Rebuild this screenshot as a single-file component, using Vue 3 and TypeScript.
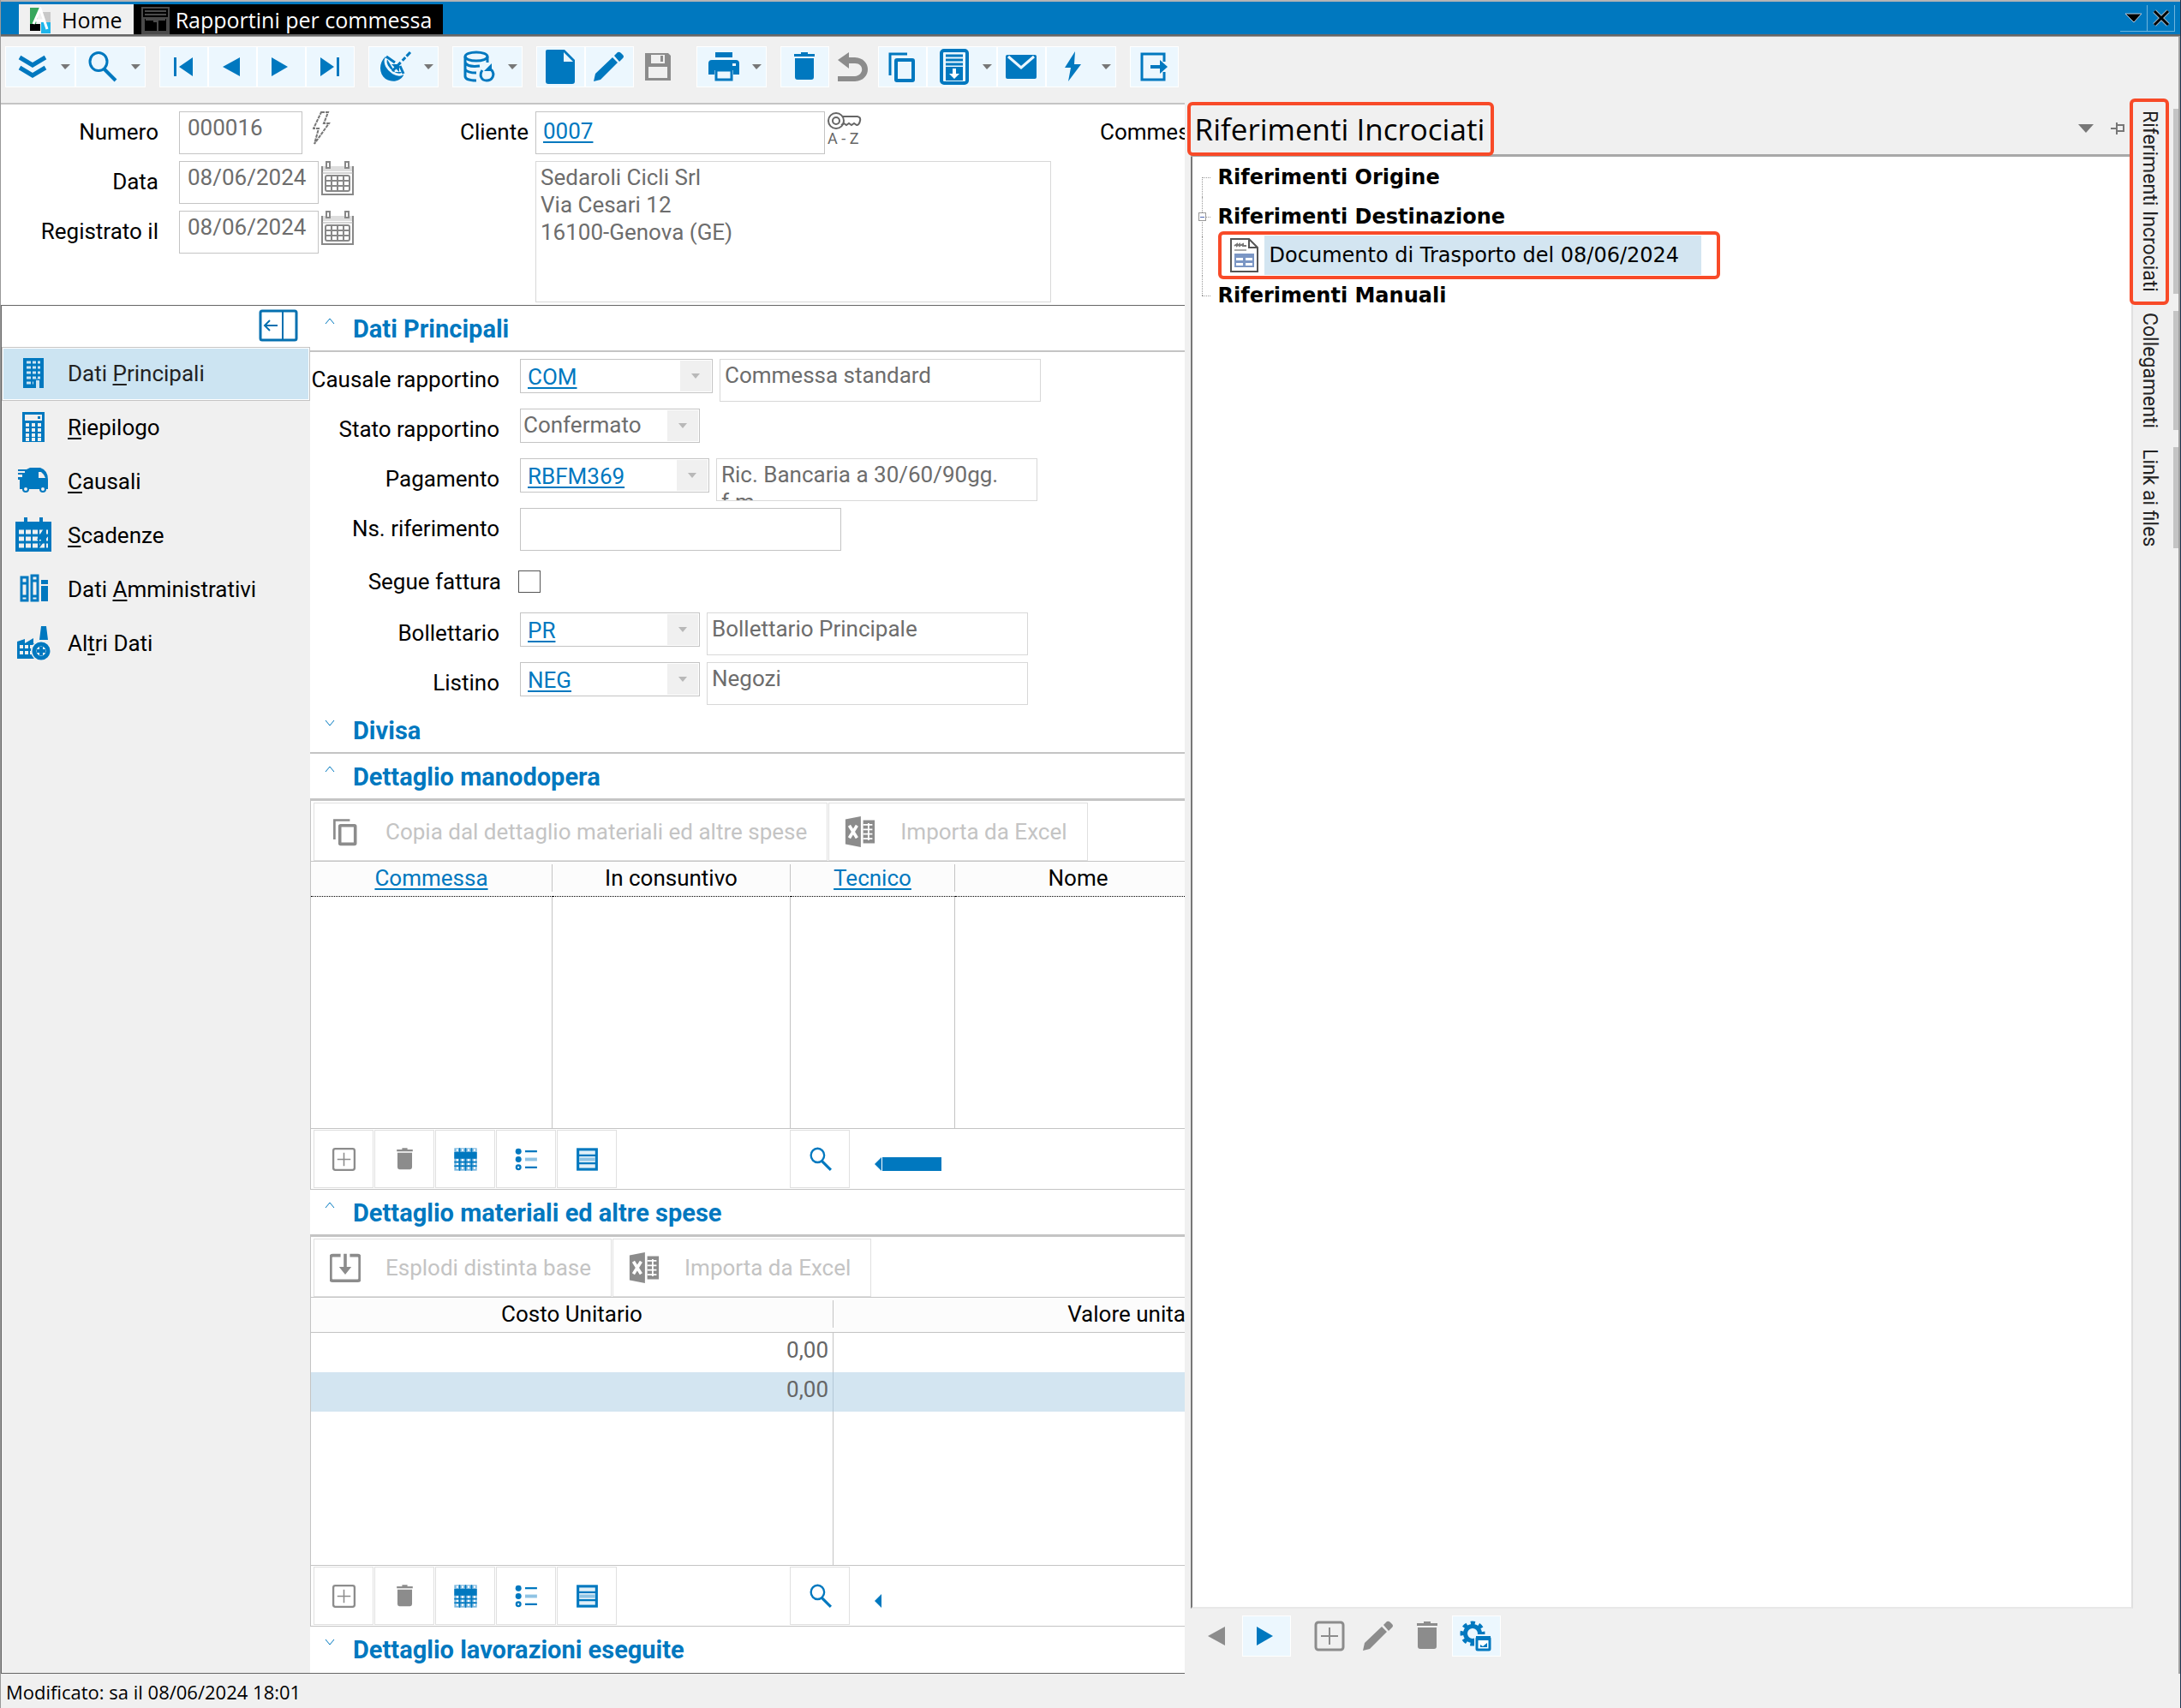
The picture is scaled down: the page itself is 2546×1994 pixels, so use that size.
<script setup lang="ts">
import { ref } from 'vue'

interface Tool {
  icon: string
  label: string
  menu?: boolean
  off?: boolean
}

const icons: Record<string, string> = {
  expand: '<path d="M6 9l15 9 15-9M6 21l15 9 15-9" fill="none" stroke="currentColor" stroke-width="5"/>',
  search: '<ellipse cx="16" cy="14" rx="10" ry="10.5" fill="none" stroke="currentColor" stroke-width="3"/><path d="M22 22l14 14" stroke="currentColor" stroke-width="4"/>',
  first: '<path d="M9 9h3v22H9zM31 9v22L15 20z" fill="currentColor"/>',
  prev: '<path d="M29 9v22L9 20z" fill="currentColor"/>',
  next: '<path d="M9 9v22l19-11z" fill="currentColor"/>',
  last: '<path d="M9 9v22l16-11zM28 9h3v22h-3z" fill="currentColor"/>',
  dish: '<path d="M9 8C1 15 1 28 9 34c8 5 17 3 21-4l-2-4-8 0z" fill="currentColor"/><path d="M10 10c-3 6 2 13 8 17 5 3 10 3 11 0" fill="none" stroke="#ecf7fe" stroke-width="3"/><path d="M10 8l10 7M30 28l-4-9" fill="none" stroke="currentColor" stroke-width="3"/><path d="M16 17h9v9z" fill="currentColor"/><path d="M17 25L38 3" stroke="currentColor" stroke-width="3" stroke-dasharray="14 3 5 2"/>',
  database: '<g fill="none" stroke="currentColor" stroke-width="3"><ellipse cx="17" cy="8" rx="13" ry="5"/><path d="M4 8v23c0 3 5 5 13 5M30 8v7M4 15c2 4 9 5 17 4M4 23c2 3 7 4 13 4M4 30"/><path d="M24 24c-4 6-1 12 5 12 7 0 10-7 6-12l-4-3"/></g><path d="M35 16v9h-9z" fill="currentColor"/>',
  file: '<path d="M5 0h20l12 12v25a3 3 0 0 1-3 3H6a3 3 0 0 1-3-3V2a2 2 0 0 1 2-2z" fill="currentColor"/><path d="M24 3v11h11z" fill="#ecf7fe"/>',
  pencil: '<path d="M2 37l2-9L24 9l6 6L10 35zM26 7l4-4q2-1 4 1l2 2q2 2 0 4l-4 4z" fill="currentColor"/>',
  save: '<path d="M7 4h25l3 3v29H5V4z" fill="currentColor"/><path d="M12 6h16v10H12zM9 20h22v13H9z" fill="#f0f0f0"/><path d="M23 7h3v7h-3z" fill="currentColor"/>',
  print: '<path d="M11 3h20v6H11zM7 12h28q4 0 4 4v13h-7v-5H10v5H3V16q0-4 4-4z" fill="currentColor"/><path d="M12 24h18v11H12z" fill="#ecf7fe" stroke="currentColor" stroke-width="3"/><path d="M31 16h4v3h-4z" fill="#ecf7fe"/>',
  trash: '<path d="M8 5h8V3h8v2h8v3H8zM9 10h22v22q0 3-3 3H12q-3 0-3-3z" fill="currentColor"/>',
  undo: '<path d="M2 12l13-9v6h7c20 1 20 27 0 28H2v-6h20c11-1 11-15 0-15h-7v6z" fill="currentColor"/>',
  copy: '<path d="M26 5H6v25" fill="none" stroke="currentColor" stroke-width="3"/><rect x="13" y="12" width="20" height="24" rx="1" fill="none" stroke="currentColor" stroke-width="4"/>',
  archive: '<rect x="6" y="1" width="30" height="38" rx="3" fill="none" stroke="currentColor" stroke-width="4"/><path d="M11 7h20M11 12h20M11 17h20" stroke="currentColor" stroke-width="3"/><path d="M11 20h20v16H11z" fill="currentColor"/><path d="M19 22h4v6h4l-6 6-6-6h4z" fill="#fff"/>',
  mail: '<rect x="2" y="6" width="36" height="28" rx="2" fill="currentColor"/><path d="M5 8l15 13L35 8" fill="none" stroke="#ecf7fe" stroke-width="3"/>',
  bolt: '<path d="M23 2L11 21h7l-3 16 15-20h-8z" fill="currentColor"/>',
  exit: '<path d="M32 14V5H6v30h26v-9" fill="none" stroke="currentColor" stroke-width="3"/><path d="M16 18h11v-6l9 8-9 8v-6H16z" fill="currentColor"/>',
  building: '<path d="M10 4h24v35h-5V30h-4v9H10z" fill="currentColor"/><path d="M14 9h16M14 15h16M14 21h16M14 27h16M14 33h8" stroke="#cce4f2" stroke-width="3"/><path d="M20 6v32M26 6v22" stroke="currentColor" stroke-width="2"/>',
  calculator: '<path d="M9 4h26v35H9z" fill="currentColor"/><path d="M12 7h20v7H12z" fill="#f0f0f0"/><path d="M27 9h3v3h-3z" fill="currentColor"/><path d="M13 19h19M13 25h19M13 31h19M13 36h19" stroke="#f0f0f0" stroke-width="4" stroke-dasharray="4 3"/>',
  truck: '<path d="M4 8h10l4-2h12q9 3 9 14v11H6V20H4v-3h5v-3H4v-2h8V10H4z" fill="currentColor"/><path d="M28 11h3q4 3 5 7h-8z" fill="#f0f0f0"/><circle cx="13" cy="31" r="4" fill="currentColor"/><circle cx="33" cy="31" r="4" fill="currentColor"/><circle cx="13" cy="31" r="2" fill="#f0f0f0"/><circle cx="33" cy="31" r="2" fill="#f0f0f0"/>',
  calendar: '<path d="M1 6h10V1h4v5h14V1h4v5h10v35H1z" fill="currentColor"/><path d="M5 18h34M5 26h34M5 34h34" stroke="#f0f0f0" stroke-width="5" stroke-dasharray="6 2"/><path d="M34 14L26 27h5l-3 11 11-15h-5l3-9z" fill="currentColor"/>',
  binders: '<g fill="none" stroke="currentColor" stroke-width="3"><path d="M8 8h7v27H8zM20 6h7v29h-7z"/><path d="M8 15h7M8 30h7M20 12h7M20 30h7"/></g><path d="M31 11h8v5h-8zM31 18h8v18h-8z" fill="currentColor"/>',
  factory: '<path d="M31 2h6l2 16H29z" fill="currentColor"/><path d="M3 40V20l9-3v5l10-6v6h3v18z" fill="currentColor"/><path d="M6 26h16M6 33h16" stroke="#f0f0f0" stroke-width="4" stroke-dasharray="4 2"/><circle cx="31" cy="31" r="12" fill="#f0f0f0"/><circle cx="31" cy="31" r="8" fill="none" stroke="currentColor" stroke-width="5"/><path d="M31 26v10M26 31h10" stroke="currentColor" stroke-width="4"/>',
  add: '<rect x="4" y="4" width="32" height="32" rx="3" fill="none" stroke="currentColor" stroke-width="3"/><path d="M20 10v20M10 20h20" stroke="currentColor" stroke-width="2"/>',
  grid: '<path d="M3 3h34v34H3z" fill="#7ab7de"/><path d="M3 9h34v10H3z" fill="currentColor"/><path d="M3 24h34M3 30h34M11 3v34M20 3v34M29 3v34" stroke="currentColor" stroke-width="2"/><path d="M6 6h3M14 6h3M23 6h3M32 6h3M6 21h3M14 21h3M23 21h3M32 21h3M6 27h3M14 27h3M23 27h3M32 27h3M6 33h3M14 33h3M23 33h3M32 33h3" stroke="#fff" stroke-width="3"/>',
  list: '<circle cx="8" cy="8" r="4.500" fill="currentColor"/><circle cx="8" cy="20" r="4.500" fill="currentColor"/><circle cx="8" cy="32" r="3" fill="none" stroke="currentColor" stroke-width="3"/><path d="M18 8h18M18 32h18" stroke="currentColor" stroke-width="3"/><path d="M18 20h18" stroke="#8fc3e4" stroke-width="5"/>',
  rows: '<rect x="6" y="5" width="28" height="30" fill="#e3f0f8" stroke="currentColor" stroke-width="4"/><path d="M6 14h28M6 26h28" stroke="currentColor" stroke-width="3"/><path d="M8 20h24" stroke="#8fc3e4" stroke-width="5"/>',
  excel: '<path d="M1 4l20-4v40L1 36z" fill="currentColor"/><path d="M24 5h15v30H24z" fill="currentColor"/><path d="M24 11h12M24 17h12M24 23h12M24 29h12M31 9v22" stroke="#fff" stroke-width="2"/><path d="M6 12l10 16M16 12L6 28" stroke="#fff" stroke-width="4"/>',
  explode: '<path d="M14 4H4q-3 0-3 3v27q0 3 3 3h32q3 0 3-3V7q0-3-3-3H26" fill="none" stroke="currentColor" stroke-width="4"/><path d="M18 2h4v17h6l-8 10-8-10h6z" fill="currentColor"/>',
  date: '<path d="M2 6v33h36V6" fill="none" stroke="#888" stroke-width="2"/><path d="M3 6h34v6H3z" fill="#ddd"/><path d="M2 14h36" stroke="#aaa" stroke-width="1"/><g fill="#fff" stroke="#888" stroke-width="2"><rect x="7" y="1" width="4" height="7"/><rect x="29" y="1" width="4" height="7"/><rect x="6" y="17" width="28" height="18" rx="2"/></g><path d="M7 23h26M7 29h26M13 17v18M20 17v18M27 17v18" stroke="#888" stroke-width="2"/>',
  gear: '<g fill="none" stroke="currentColor"><circle cx="16" cy="17" r="8.500" stroke-width="5"/><circle cx="16" cy="17" r="12" stroke-width="5" stroke-dasharray="5 4.420" stroke-dashoffset="2.500"/></g><path d="M18 18h21v21H18z" fill="#ecf7fe"/><rect x="21" y="22" width="15" height="14" rx="1" fill="#fff" stroke="currentColor" stroke-width="3"/><path d="M20 20h17v5H20zM25 30l3 2 5-4v5h-8z" fill="currentColor"/>',
}

const toolGroups: Tool[][] = [
  [{ icon: 'expand', label: 'Espandi', menu: true }, { icon: 'search', label: 'Cerca', menu: true }],
  [{ icon: 'first', label: 'Primo' }, { icon: 'prev', label: 'Precedente' }, { icon: 'next', label: 'Successivo' }, { icon: 'last', label: 'Ultimo' }],
  [{ icon: 'dish', label: 'Collega', menu: true }],
  [{ icon: 'database', label: 'Dati', menu: true }],
  [{ icon: 'file', label: 'Nuovo' }, { icon: 'pencil', label: 'Modifica' }, { icon: 'save', label: 'Salva', off: true }],
  [{ icon: 'print', label: 'Stampa', menu: true }],
  [{ icon: 'trash', label: 'Elimina' }, { icon: 'undo', label: 'Annulla', off: true }, { icon: 'copy', label: 'Copia' }, { icon: 'archive', label: 'Archivia', menu: true }, { icon: 'mail', label: 'Invia' }, { icon: 'bolt', label: 'Azioni', menu: true }],
  [{ icon: 'exit', label: 'Esci' }],
]

const pages = [
  { icon: 'building', parts: ['Dati ', 'P', 'rincipali'] },
  { icon: 'calculator', parts: ['', 'R', 'iepilogo'] },
  { icon: 'truck', parts: ['', 'C', 'ausali'] },
  { icon: 'calendar', parts: ['', 'S', 'cadenze'] },
  { icon: 'binders', parts: ['Dati ', 'A', 'mministrativi'] },
  { icon: 'factory', parts: ['Al', 't', 'ri Dati'] },
]
const page = ref(0)

const gridTools: Tool[] = [
  { icon: 'add', label: 'Aggiungi', off: true },
  { icon: 'trash', label: 'Elimina', off: true },
  { icon: 'grid', label: 'Griglia' },
  { icon: 'list', label: 'Elenco' },
  { icon: 'rows', label: 'Righe' },
]

const refTools: Tool[] = [
  { icon: 'prev', label: 'Precedente', off: true },
  { icon: 'next', label: 'Successivo' },
  { icon: 'add', label: 'Aggiungi', off: true },
  { icon: 'pencil', label: 'Modifica', off: true },
  { icon: 'trash', label: 'Elimina', off: true },
  { icon: 'gear', label: 'Impostazioni' },
]

const sideTabs = ['Riferimenti Incrociati', 'Collegamenti', 'Link ai files']

const numero = ref('000016')
const data = ref('08/06/2024')
const registrato = ref('08/06/2024')
const cliente = ref('0007')
const indirizzo = ref('Sedaroli Cicli Srl\nVia Cesari 12\n16100-Genova (GE)')
const causale = ref('COM')
const stato = ref('Confermato')
const pagamento = ref('RBFM369')
const riferimento = ref('')
const segue = ref(false)
const bollettario = ref('PR')
const listino = ref('NEG')
</script>

<template>
  <div class="window">
    <header class="titlebar">
      <nav class="doc-tabs">
        <button class="doc-tab">
          <svg width="25" height="32" viewBox="0 0 25 32"><path d="M0 1h11L7 20H0z" fill="#37a75c" /><path d="M13 6h11v16h-7z" fill="#c8c8c8" /><path d="M0 20h12v8H0z" fill="#000" /><path d="M13 18h11v13H13z" fill="#1fb5ea" /><path d="M4 20L12 2l8 24M7 16h10" fill="none" stroke="#fff" stroke-width="3" /></svg>
          <span>Home</span>
        </button>
        <button class="doc-tab current">
          <svg width="33" height="32" viewBox="0 0 33 32" fill="none" stroke="#4a4a4a" stroke-width="2"><rect x="1" y="1" width="31" height="30" /><path d="M4 5h25M4 9h25M3 13h27v16H3zM14 17h5v11M5 15h23" /></svg>
          <span>Rapportini per commessa</span>
        </button>
      </nav>
      <div class="window-controls">
        <button aria-label="Elenco schede"><svg width="20" height="12" viewBox="0 0 20 12"><path d="M0 1h19L10 11z" fill="#000" stroke="#bcd" stroke-width="1" /></svg></button>
        <button aria-label="Chiudi"><svg width="20" height="20" viewBox="0 0 20 20"><path d="M2 2l16 16M18 2L2 18" stroke="#9cb4c4" stroke-width="5" /><path d="M2 2l16 16M18 2L2 18" stroke="#000" stroke-width="3" /></svg></button>
      </div>
    </header>

    <div class="toolbar">
      <div v-for="(group, g) in toolGroups" :key="g" class="tool-group">
        <button v-for="tool in group" :key="tool.icon" class="tool" :class="{ menu: tool.menu, off: tool.off }" :aria-label="tool.label">
          <svg width="40" height="40" viewBox="0 0 40 40" overflow="visible" v-html="icons[tool.icon]"></svg>
          <svg v-if="tool.menu" class="caret" width="11" height="6" viewBox="0 0 11 6"><path d="M0 0h11L5 6z" /></svg>
        </button>
      </div>
    </div>

    <div class="workspace">
      <main class="document">
        <section class="head-form">
          <div class="head-left">
            <div class="head-row">
              <label for="numero">Numero</label>
              <input id="numero" v-model="numero" class="box short">
              <svg width="40" height="40" viewBox="0 0 40 40"><path d="M10 1h8l-5 13h6L2 38l5-18H1z" fill="none" stroke="#777" stroke-width="2" stroke-dasharray="4 1" /></svg>
            </div>
            <div class="head-row">
              <label for="data">Data</label>
              <input id="data" v-model="data" class="box date">
              <svg width="40" height="40" viewBox="0 0 40 40" v-html="icons.date"></svg>
            </div>
            <div class="head-row">
              <label for="registrato">Registrato il</label>
              <input id="registrato" v-model="registrato" class="box date">
              <svg width="40" height="40" viewBox="0 0 40 40" v-html="icons.date"></svg>
            </div>
          </div>
          <div class="head-right">
            <div class="client-row">
              <label for="cliente" class="client-label">Cliente</label>
              <input id="cliente" v-model="cliente" class="box client link">
              <div class="key">
                <svg width="40" height="21" viewBox="0 0 40 21" fill="none" stroke="#666" stroke-width="2"><circle cx="10" cy="10" r="9" /><circle cx="10" cy="10" r="4" /><path d="M17 5h18q4 1 3 5-1 5-4 5l-3-2-3 2-3-2-3 2-3-2-3 2" /></svg>
                <span>A - Z</span>
              </div>
              <span class="job-label">Commessa</span>
            </div>
            <textarea v-model="indirizzo" class="note address" aria-label="Indirizzo"></textarea>
          </div>
        </section>

        <div class="body">
          <aside class="pages">
            <div class="pages-top">
              <button class="collapse" aria-label="Riduci">
                <svg width="46" height="38" viewBox="0 0 46 38" fill="none" stroke="#0570b0" stroke-width="3"><rect x="2" y="2" width="42" height="34" rx="2" /><path d="M28 2v34M7 19h15M13 13l-6 6 6 6" stroke-width="2" /></svg>
              </button>
            </div>
            <button v-for="(p, i) in pages" :key="p.icon" class="page" :class="{ selected: page === i }" @click="page = i">
              <svg width="44" height="44" viewBox="0 0 44 44" v-html="icons[p.icon]"></svg>
              <span>{{ p.parts[0] }}<u>{{ p.parts[1] }}</u>{{ p.parts[2] }}</span>
            </button>
          </aside>

          <div class="details">
            <h2 class="section"><svg class="chev" width="12" height="8" viewBox="0 0 12 8"><path d="M1 7l5-6 5 6" /></svg>Dati Principali</h2>
            <div class="form">
              <div class="row">
                <label for="causale">Causale rapportino</label>
                <div class="combo w-a"><input id="causale" v-model="causale" class="link"><button aria-label="Apri"><svg width="10" height="6" viewBox="0 0 10 6"><path d="M0 0h10L5 6z" /></svg></button></div>
                <textarea class="note" aria-label="Descrizione causale">Commessa standard</textarea>
              </div>
              <div class="row">
                <label for="stato">Stato rapportino</label>
                <div class="combo w-c"><select id="stato" v-model="stato"><option>Confermato</option></select><span class="drop"><svg width="10" height="6" viewBox="0 0 10 6"><path d="M0 0h10L5 6z" /></svg></span></div>
              </div>
              <div class="row">
                <label for="pagamento">Pagamento</label>
                <div class="combo w-b"><input id="pagamento" v-model="pagamento" class="link"><button aria-label="Apri"><svg width="10" height="6" viewBox="0 0 10 6"><path d="M0 0h10L5 6z" /></svg></button></div>
                <textarea class="note" aria-label="Descrizione pagamento">Ric. Bancaria a 30/60/90gg. f.m.</textarea>
              </div>
              <div class="row">
                <label for="riferimento">Ns. riferimento</label>
                <input id="riferimento" v-model="riferimento" class="box wide">
              </div>
              <div class="row check-row">
                <label for="segue">Segue fattura</label>
                <input id="segue" v-model="segue" type="checkbox" class="check">
              </div>
              <div class="row">
                <label for="bollettario">Bollettario</label>
                <div class="combo w-c"><input id="bollettario" v-model="bollettario" class="link"><button aria-label="Apri"><svg width="10" height="6" viewBox="0 0 10 6"><path d="M0 0h10L5 6z" /></svg></button></div>
                <textarea class="note" aria-label="Descrizione bollettario">Bollettario Principale</textarea>
              </div>
              <div class="row">
                <label for="listino">Listino</label>
                <div class="combo w-c"><input id="listino" v-model="listino" class="link"><button aria-label="Apri"><svg width="10" height="6" viewBox="0 0 10 6"><path d="M0 0h10L5 6z" /></svg></button></div>
                <textarea class="note" aria-label="Descrizione listino">Negozi</textarea>
              </div>
            </div>

            <h2 class="section"><svg class="chev" width="12" height="8" viewBox="0 0 12 8"><path d="M1 1l5 6 5-6" /></svg>Divisa</h2>
            <h2 class="section"><svg class="chev" width="12" height="8" viewBox="0 0 12 8"><path d="M1 7l5-6 5 6" /></svg>Dettaglio manodopera</h2>

            <div class="panel">
              <div class="panel-bar">
                <button class="command" disabled><svg width="36" height="36" viewBox="0 0 40 40" v-html="icons.copy"></svg>Copia dal dettaglio materiali ed altre spese</button>
                <button class="command" disabled><svg width="36" height="36" viewBox="0 0 40 40" v-html="icons.excel"></svg>Importa da Excel</button>
              </div>
              <div class="clip">
                <table class="labour">
                  <colgroup><col class="c1"><col class="c2"><col class="c3"><col class="c4"></colgroup>
                  <thead class="dotted"><tr><th><a href="#">Commessa</a></th><th><span>In consuntivo</span></th><th><a href="#">Tecnico</a></th><th><span>Nome</span></th></tr></thead>
                  <tbody><tr><td></td><td></td><td></td><td></td></tr></tbody>
                </table>
              </div>
              <div class="panel-foot">
                <button v-for="t in gridTools" :key="t.icon" class="mini" :class="{ off: t.off }" :aria-label="t.label"><svg width="31" height="31" viewBox="0 0 40 40" v-html="icons[t.icon]"></svg></button>
                <button class="mini find" aria-label="Cerca"><svg width="31" height="31" viewBox="0 0 40 40" v-html="icons.search"></svg></button>
                <div class="scroll"><svg width="8" height="16" viewBox="0 0 8 16"><path d="M8 0v16L0 8z" fill="currentColor" /></svg><i></i></div>
              </div>
            </div>

            <h2 class="section"><svg class="chev" width="12" height="8" viewBox="0 0 12 8"><path d="M1 7l5-6 5 6" /></svg>Dettaglio materiali ed altre spese</h2>
            <div class="panel">
              <div class="panel-bar">
                <button class="command" disabled><svg width="36" height="36" viewBox="0 0 40 40" v-html="icons.explode"></svg>Esplodi distinta base</button>
                <button class="command" disabled><svg width="36" height="36" viewBox="0 0 40 40" v-html="icons.excel"></svg>Importa da Excel</button>
              </div>
              <div class="clip">
                <table class="costs">
                  <colgroup><col class="k1"><col class="k2"></colgroup>
                  <thead><tr><th><span>Costo Unitario</span></th><th><span>Valore unitario</span></th></tr></thead>
                  <tbody>
                    <tr><td>0,00</td><td></td></tr>
                    <tr class="picked"><td>0,00</td><td></td></tr>
                    <tr class="filler"><td></td><td></td></tr>
                  </tbody>
                </table>
              </div>
              <div class="panel-foot">
                <button v-for="t in gridTools" :key="t.icon" class="mini" :class="{ off: t.off }" :aria-label="t.label"><svg width="31" height="31" viewBox="0 0 40 40" v-html="icons[t.icon]"></svg></button>
                <button class="mini find" aria-label="Cerca"><svg width="31" height="31" viewBox="0 0 40 40" v-html="icons.search"></svg></button>
                <div class="scroll"><svg width="8" height="16" viewBox="0 0 8 16"><path d="M8 0v16L0 8z" fill="currentColor" /></svg></div>
              </div>
            </div>
            <h2 class="section final"><svg class="chev" width="12" height="8" viewBox="0 0 12 8"><path d="M1 1l5 6 5-6" /></svg>Dettaglio lavorazioni eseguite</h2>
          </div>
        </div>
      </main>

      <aside class="references">
        <header class="ref-head">
          <h2>Riferimenti Incrociati</h2>
          <div class="ref-controls">
            <button aria-label="Menu"><svg width="18" height="10" viewBox="0 0 18 10"><path d="M0 0h18L9 10z" fill="#777" /></svg></button>
            <button aria-label="Blocca"><svg width="16" height="14" viewBox="0 0 16 14" fill="none" stroke="#777" stroke-width="2"><path d="M0 7h6M7 0v14M7 3h8v7H7" /></svg></button>
          </div>
        </header>
        <div class="tree">
          <ul>
            <li class="node"><i class="stub start"></i><b>Riferimenti Origine</b></li>
            <li class="node"><i class="stub"><em></em></i><b>Riferimenti Destinazione</b></li>
            <li class="node leaf">
              <i class="stub through"></i>
              <div class="marked">
                <svg width="33" height="40" viewBox="0 0 33 40"><path d="M1 1h21l10 10v28H1z" fill="#fff" stroke="#555" stroke-width="2" /><path d="M22 1v10h10" fill="none" stroke="#555" stroke-width="2" /><path d="M5 9l3-2v2l3-2v2l4-2v2h4" fill="none" stroke="#777" stroke-width="2" /><path d="M5 14h14" stroke="#aaa" stroke-width="2" /><path d="M5 18h23v16H5z" fill="#7b96c4" /><path d="M7 23h8v3H7zM18 23h8v3h-8zM7 29h8v3H7zM18 29h8v3h-8z" fill="#fff" /></svg>
                <a href="#">Documento di Trasporto del 08/06/2024</a>
              </div>
            </li>
            <li class="node"><i class="stub end"></i><b>Riferimenti Manuali</b></li>
          </ul>
        </div>
        <footer class="ref-foot">
          <button v-for="t in refTools" :key="t.icon" class="tool" :class="[t.icon, { off: t.off }]" :aria-label="t.label"><svg width="40" height="40" viewBox="0 0 40 40" v-html="icons[t.icon]"></svg></button>
        </footer>
      </aside>

      <nav class="side-tabs">
        <button v-for="(tab, i) in sideTabs" :key="tab" :class="{ outlined: i === 0 }">{{ tab }}</button>
      </nav>
    </div>

    <footer class="status">Modificato: sa il 08/06/2024 18:01</footer>
  </div>
</template>

<style>
body {
  margin: 0;
  background: #f0f0f0;
}
</style>

<style scoped>
* {
  box-sizing: border-box;
}
.window {
  display: flex;
  flex-direction: column;
  min-height: 100vh;
  background: #f0f0f0;
  border-left: 1px solid #999;
  border-right: 1px solid #1f3550;
  border-bottom: 1px solid #999;
  font: 26px/32px Roboto, sans-serif;
  color: #000;
}
button {
  font: inherit;
  color: inherit;
  background: none;
  border: 0;
  padding: 0;
}
svg {
  flex: none;
  display: block;
}
h2 {
  margin: 0;
}
input,
textarea,
select {
  font: inherit;
  color: #6d6d6d;
  margin: 0;
  border-radius: 0;
}

.titlebar {
  display: flex;
  justify-content: space-between;
  height: 42px;
  border-top: 2px solid #b4b4b4;
  border-bottom: 2px solid #666;
  background: #0078bf;
}
.doc-tabs {
  display: flex;
  padding: 3px 0 0 21px;
}
.doc-tab {
  display: flex;
  align-items: center;
  gap: 12px;
  padding: 2px 13px 0;
  background: #f0f0f0;
  font: 25px/33px "Open Sans", sans-serif;
}
.doc-tab.current {
  background: #000;
  color: #fff;
  gap: 7px;
  padding: 2px 13px 0 9px;
}
.window-controls {
  display: flex;
  padding: 4px 6px 3px 0;
}
.window-controls button {
  display: flex;
  align-items: center;
  justify-content: center;
  width: 32px;
  border-right: 1px solid #6fb4dc;
  border-bottom: 1px solid #6fb4dc;
}

.toolbar {
  display: flex;
  gap: 16px;
  height: 78px;
  padding: 11px 4px 0 5px;
  border-top: 1px solid #999;
  border-right: 2px solid #a0a0a0;
}
.tool-group {
  display: flex;
}
.tool {
  display: flex;
  align-items: center;
  width: 57px;
  height: 48px;
  padding: 0 7px;
  border: 1px solid #fff;
  background: #ecf7fe;
  color: #0078bf;
}
.tool.menu {
  justify-content: space-between;
  width: 82px;
  padding: 0 5px 0 10px;
}
.tool.off {
  background: none;
  border-color: transparent;
  color: #8c8c8c;
}
.caret {
  fill: #777;
}

.workspace {
  display: flex;
  flex: 1;
  border-right: 2px solid #a0a0a0;
}
.document {
  display: flex;
  flex-direction: column;
  flex: 1381 1 0;
  min-width: 0;
  overflow: hidden;
  border-top: 2px solid #c4c4c4;
  border-bottom: 1px solid #666;
  background: #fff;
}
.head-form {
  display: flex;
  height: 235px;
  padding-top: 8px;
  border-bottom: 1px solid #666;
}
.head-left {
  display: flex;
  flex-direction: column;
  flex: none;
  gap: 8px;
  width: 416px;
}
.head-row {
  display: flex;
  align-items: flex-start;
  gap: 2px;
}
.head-row label {
  width: 184px;
  margin-right: 22px;
  line-height: 48px;
  text-align: right;
}
.box {
  height: 50px;
  padding: 2px 9px 14px;
  border: 1px solid #c4c4c4;
  background: #fff;
}
.box.short {
  width: 144px;
  margin-right: 10px;
}
.box.date {
  width: 163px;
}
.box.wide {
  width: 375px;
}
.box.client {
  flex: none;
  width: 338px;
  padding: 4px 8px 8px;
}
.link {
  color: #0078bf;
  text-decoration: underline;
  text-underline-offset: 3px;
}
.head-right {
  flex: 1;
  min-width: 0;
}
.client-row {
  display: flex;
  height: 50px;
  margin-bottom: 8px;
  line-height: 48px;
  white-space: nowrap;
}
.client-label {
  flex: none;
  width: 200px;
  margin-right: 8px;
  text-align: right;
}
.key {
  flex: none;
  margin: 1px 278px 0 3px;
  color: #666;
  font-size: 18px;
  line-height: 20px;
}
.job-label {
  min-width: 0;
  overflow: hidden;
}
.note {
  display: block;
  width: 375px;
  height: 50px;
  padding: 2px 5px 0;
  overflow: hidden;
  resize: none;
  border: 1px solid #d8d8d8;
  background: #fff;
}
.note.address {
  width: 602px;
  height: 165px;
  margin-left: 208px;
  padding: 2px 5px;
}

.body {
  display: flex;
  flex: 1;
  border-left: 1px solid #666;
}
.pages {
  flex: none;
  width: 360px;
  background: #f0f0f0;
}
.pages-top {
  display: flex;
  justify-content: flex-end;
  height: 48px;
  padding: 4px 14px 0 0;
  background: #fff;
}
.collapse {
  height: 38px;
}
.page {
  display: flex;
  align-items: center;
  gap: 18px;
  width: 100%;
  height: 63px;
  padding: 0 0 1px 14px;
  border: 1px solid transparent;
  color: #000;
}
.page svg {
  color: #0078bf;
}
.page.selected {
  background: #cce4f2;
  border-color: #c4c4c4;
  box-shadow: inset 0 0 0 1px #fff;
  color: #222;
}
.page u {
  text-underline-offset: 3px;
}

.details {
  flex: 1;
  min-width: 0;
  background: #fff;
}
.section {
  display: flex;
  align-items: flex-start;
  gap: 21px;
  height: 54px;
  padding: 11px 0 0 17px;
  border-bottom: 2px solid #c4c4c4;
  color: #0078bf;
  font-size: 29px;
  font-weight: 700;
  line-height: 32px;
}
.section.final {
  border: 0;
}
.chev {
  margin-top: 3px;
  fill: none;
  stroke: #0078bf;
  stroke-width: 1;
}
.form {
  display: flex;
  flex-direction: column;
  gap: 8px;
  height: 415px;
  padding-top: 8px;
}
.row {
  display: flex;
  align-items: flex-start;
  height: 50px;
}
.row label {
  flex: none;
  width: 221px;
  margin-right: 24px;
  line-height: 48px;
  text-align: right;
  white-space: nowrap;
}
.check-row {
  height: 56px;
  align-items: center;
}
.check-row label {
  width: 223px;
  margin-right: 20px;
}
.check {
  appearance: none;
  width: 26px;
  height: 26px;
  border: 1px solid #555;
  background: #fff;
}
.combo {
  display: flex;
  height: 40px;
  margin-right: 8px;
  padding: 1px;
  border: 1px solid #c4c4c4;
}
.w-a {
  width: 225px;
}
.w-b {
  width: 221px;
}
.w-c {
  width: 210px;
}
.combo input,
.combo select {
  flex: 1;
  min-width: 0;
  padding: 2px 0 0 7px;
  border: 0;
  background: #fff;
}
.combo select {
  appearance: none;
  padding: 0 0 3px 2px;
}
.combo button,
.drop {
  display: flex;
  flex: none;
  align-items: center;
  justify-content: center;
  width: 36px;
  background: #f0f0f0;
  fill: #b8b8b8;
}

.panel {
  border: 1px solid #c4c4c4;
  border-right: 0;
}
.panel-bar {
  display: flex;
  gap: 1px;
  height: 70px;
  padding: 2px 3px 0;
}
.command {
  display: flex;
  align-items: center;
  height: 68px;
  gap: 29px;
  padding: 0 23px 0 18px;
  border: 1px solid #e0e0e0;
  color: #c4c4c4;
  white-space: nowrap;
}
.command svg {
  color: #8c8c8c;
}
.clip {
  overflow: hidden;
}
table {
  table-layout: fixed;
  border-collapse: separate;
  border-spacing: 0;
}
.labour {
  width: 1040px;
}
.costs {
  width: 1325px;
}
.c1 {
  width: 282px;
}
.c2 {
  width: 278px;
}
.c3 {
  width: 192px;
}
.c4 {
  width: 288px;
}
.k1 {
  width: 610px;
}
.k2 {
  width: 715px;
}
th {
  height: 42px;
  padding: 3px 0 5px;
  border-top: 1px solid #c4c4c4;
  border-bottom: 1px solid #c4c4c4;
  background: #fcfcfc;
  font-weight: 400;
  line-height: 32px;
}
.dotted th {
  border-bottom: 1px dotted #000;
}
th a,
th span {
  display: block;
  border-right: 1px solid #c4c4c4;
}
th a {
  color: #0078bf;
  text-underline-offset: 3px;
}
td {
  height: 46px;
  padding: 0 5px 6px;
  border-right: 1px solid #c4c4c4;
  color: #666;
  text-align: right;
}
.labour td {
  height: 270px;
}
.picked td {
  background: #d3e5f1;
  border-color: #b4c8d6;
}
.filler td {
  height: 179px;
}
.panel-foot {
  display: flex;
  align-items: center;
  height: 71px;
  padding-left: 3px;
  border-top: 1px solid #c4c4c4;
}
.mini {
  display: flex;
  align-items: center;
  justify-content: center;
  width: 70px;
  height: 68px;
  margin-right: 1px;
  border: 1px solid #e0e0e0;
  color: #0078bf;
}
.mini.off {
  color: #8c8c8c;
}
.mini.find {
  margin-left: 201px;
}
.scroll {
  display: flex;
  gap: 1px;
  margin: 11px 0 0 28px;
  color: #0078bf;
}
.scroll i {
  width: 69px;
  height: 16px;
  background: #0078bf;
}

.references {
  display: flex;
  flex-direction: column;
  flex: 1107 1 0;
  min-width: 0;
}
.ref-head {
  display: flex;
  justify-content: space-between;
  height: 63px;
  margin-left: 7px;
  border-bottom: 3px solid #a8a8a8;
}
.ref-head h2 {
  z-index: 1;
  height: 63px;
  margin: -1px 0 0 -4px;
  padding: 0 7px 0 5px;
  border: 4px solid #f84a28;
  border-radius: 6px;
  font: 35px/56px "Open Sans", sans-serif;
}
.ref-controls {
  display: flex;
  align-items: center;
  gap: 20px;
  padding-right: 10px;
}
.tree {
  flex: 1;
  margin-left: 7px;
  padding-top: 1px;
  border: solid #777;
  border-width: 0 2px 2px;
  border-right-color: #e0e0e0;
  border-bottom-color: #e8e8e8;
  background: #fff;
}
.tree ul {
  margin: 0;
  padding: 0 0 0 11px;
  list-style: none;
  font: 24px/46px "DejaVu Sans", sans-serif;
}
.node {
  display: flex;
  height: 46px;
}
.node b {
  white-space: nowrap;
}
.stub {
  position: relative;
  flex: none;
  width: 19px;
}
.stub::before {
  position: absolute;
  inset: 0 auto 0 0;
  border-left: 1px dotted #999;
  content: "";
}
.stub.start::before {
  top: 23px;
}
.stub.end::before {
  bottom: 23px;
}
.stub:not(.through)::after {
  position: absolute;
  top: 23px;
  left: 0;
  width: 10px;
  border-top: 1px dotted #999;
  content: "";
}
.stub em {
  position: absolute;
  z-index: 1;
  top: 18px;
  left: -4px;
  width: 9px;
  height: 10px;
  border: 1px solid #999;
  background: linear-gradient(#4a63b0, #4a63b0) center / 5px 1px no-repeat #fff;
}
.marked {
  display: flex;
  align-items: center;
  height: 56px;
  margin-top: -6px;
  padding: 0 18px 0 10px;
  border: 4px solid #f84a28;
  border-radius: 6px;
}
.marked a {
  height: 46px;
  margin-left: 7px;
  padding: 0 26px 0 6px;
  background: #d3e5f1;
  color: #000;
  text-decoration: none;
  white-space: nowrap;
}
.ref-foot {
  display: flex;
  height: 76px;
  padding: 8px 0 0 10px;
}
.ref-foot .next {
  margin-right: 17px;
}

.side-tabs {
  display: flex;
  flex: none;
  flex-direction: column;
  gap: 20px;
  width: 53px;
  padding-top: 7px;
}
.side-tabs button {
  position: relative;
  writing-mode: vertical-rl;
  width: 53px;
  padding: 2px 12px 2px 3px;
  border-right: 6px solid #c4c4c4;
  color: #222;
  font-size: 23px;
  line-height: 32px;
  text-align: left;
  white-space: nowrap;
}
.side-tabs .outlined::after {
  position: absolute;
  inset: -12px 5px -13px -4px;
  border: 4px solid #f84a28;
  border-radius: 6px;
  content: "";
}
.status {
  height: 40px;
  padding-left: 6px;
  font: 22px/42px "Open Sans", sans-serif;
}
</style>
